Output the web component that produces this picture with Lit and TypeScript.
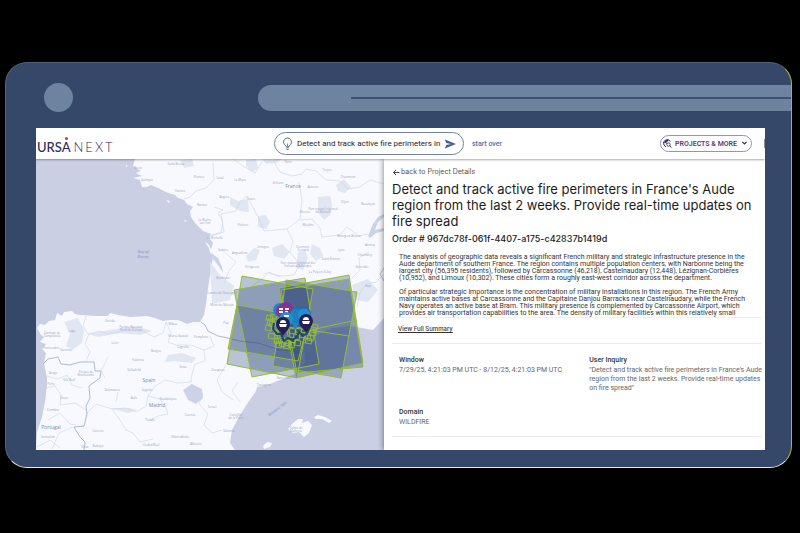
import { LitElement, html, svg, css } from "lit";
import { customElement } from "lit/decorators.js";

type Label = [number, number, string];

const TOWNS: Label[] = [
  [138, 169, "Brest"], [147, 181, "Quimper"], [176, 165, "Saint-Brieuc"], [199, 178, "Rennes"], [220, 179, "Laval"],
  [240, 181, "Le Mans"], [224, 198, "Angers"], [251, 200, "Tours"], [202, 206, "Nantes"], [180, 192, "Vannes"],
  [205, 221, "La Roche-"], [205, 224, "sur-Yon"], [215, 239, "La Rochelle"], [223, 251, "Saintes"], [243, 226, "Poitiers"],
  [263, 248, "Limoges"], [240, 254, "Angoulême"], [252, 268, "Périgueux"], [223, 279, "Bordeaux"], [278, 184, "Orléans"],
  [313, 188, "Auxerre"], [327, 171, "Troyes"], [348, 178, "Chaumont"], [345, 203, "Dijon"], [368, 205, "Besançon"],
  [305, 213, "Nevers"], [308, 226, "Moulins"], [323, 210, "Parc naturel régional"], [323, 213, "du Morvan"],
  [349, 237, "Bourg-en-Bresse"], [303, 248, "Clermont-"], [303, 251, "Ferrand"], [331, 260, "Saint-Étienne"], [341, 251, "Lyon"],
  [298, 264, "Parc naturel régional des"], [298, 267, "Volcans d'Auvergne"], [320, 273, "Le Puy-en-Velay"], [362, 268, "Grenoble"],
  [370, 246, "Annecy"], [365, 256, "Chambéry"], [368, 287, "Gap"], [222, 294, "Landes de Gascogne"],
  [288, 163, "Paris"], [52, 334, "Santiago de"], [52, 337, "Compostela"], [72, 332, "Lugo"], [110, 322, "Oviedo"],
  [131, 328, "Parque Nacional"], [131, 331, "Picos de Europa"], [173, 325, "Bilbao"], [178, 337, "Vitoria-Gasteiz"],
  [201, 338, "Pamplona"], [115, 344, "León"], [156, 352, "Burgos"], [138, 361, "Palencia"], [134, 371, "Valladolid"],
  [183, 348, "Logroño"], [183, 368, "Soria"], [218, 371, "Zaragoza"], [112, 391, "Salamanca"], [134, 399, "Ávila"],
  [147, 391, "Segovia"], [168, 400, "Guadalajara"], [150, 421, "Toledo"], [190, 416, "Cuenca"], [212, 408, "Teruel"],
  [98, 432, "Cáceres"], [98, 447, "Badajoz"], [151, 446, "Ciudad Real"], [180, 438, "Villarrobledo"], [196, 445, "Albacete"],
  [229, 432, "Valencia"], [236, 416, "Castellón"], [236, 419, "de la Plana"], [51, 349, "Pontevedra"], [66, 351, "Ourense"],
  [53, 374, "Braga"], [86, 373, "Parque de"], [86, 376, "Montesinho"], [51, 385, "Porto"], [69, 381, "Vila Real"],
  [64, 399, "Viseu"], [53, 411, "Coimbra"], [48, 438, "Santarém"], [85, 448, "Elvas"], [284, 379, "Barcelona"],
  [264, 386, "Tarragona"], [222, 306, "Mont-de-Marsan"], [226, 324, "Pau"], [296, 429, "Palma de"], [296, 432, "Mallorca"],
];

const BORDERS = [
  "M213 163 214 180 206 188 196 191 190 197 184 199",
  "M218 213 223 210 214 207M218 213 223 222 221 232 212 235",
  "M233 159 243 166 255 173 262 162M208 237 224 232 221 214 236 211 239 203 247 196",
  "M247 196 260 221 264 231 287 229 299 220 312 219 320 228 322 237 340 235 347 227 359 236 368 234",
  "M274 162 280 172 292 176 302 174 306 169 316 171 326 180 340 181 348 189 360 187 370 180 384 184",
  "M299 182 302 200 300 219M287 229 293 241 290 252 300 264 294 275 281 276 268 273 262 279 250 288",
  "M222 250 236 262 229 271 224 283M263 275 269 272 280 277M352 278 360 270 359 258 369 252",
  "M357 307 360 292 367 284 376 282 384 274",
  "M86 316 83 326 88 334 100 331 107 334 121 332 132 327 145 332 154 337 163 333 166 322",
  "M166 322 171 333 168 342 176 345 191 345 204 350 214 346 210 336",
  "M89 334 85 344 90 352 86 361M204 350 205 361 195 364 192 374 191 382",
  "M191 382 178 383 165 380 155 386 148 396 146 406 136 412 126 408 112 409 96 404 86 414",
  "M191 384 203 394 199 404 208 414 204 425 212 433 222 430",
  "M148 396 160 399 166 408 168 414 158 416 150 420M112 409 120 420 126 430 133 433 140 442 153 439",
  "M46 376 58 379 67 375 72 385 82 388M46 388 55 386 61 395 60 405 75 403 86 410M48 420 60 413 70 424 76 425",
  "M108 357 101 371 105 378M118 392 116 402M226 365 217 380 222 392 233 400M238 382 232 391 240 402",
  "M37 447 50 440 60 448M52 449 59 433 73 427",
];

const PARKS = [
  "M64 322 78 318 84 330 82 343 72 350 66 346 70 334Z",
  "M88 334 104 331 122 328 140 327 152 331 140 335 120 333 98 337Z",
  "M168 355 182 353 196 358 192 363 174 361 165 362Z",
  "M318 197 330 196 332 205 330 215 324 220 318 212Z",
  "M336 185 344 179 351 187 345 193 338 191Z",
  "M230 197 238 201 248 199 249 212 240 211 230 205Z",
  "M258 216 266 215 270 222 266 229 258 227Z",
  "M246 256 254 248 260 250 256 260 248 262Z",
  "M272 248 282 244 290 252 284 259 274 256Z",
  "M298 252 305 250 308 258 303 270 296 268Z",
  "M312 244 320 248 323 256 316 261 310 254Z",
  "M210 262 220 275 234 286 230 300 212 304Z",
  "M246 160 256 159 258 168 252 172 246 166Z",
  "M262 159 282 159 276 163 266 164Z",
  "M352 285 368 279 378 290 368 302 356 300Z",
  "M110 408 128 408 138 410 128 413Z",
  "M180 160 192 159 194 166 184 168Z",
];

const FOOTPRINTS = [
  "M234 290 305 278 319 364 252 377Z",
  "M242 276 313 289 297 378 227 364Z",
  "M237 305 309 318 298 361 228 349Z",
  "M286 280 357 292 341 378 273 366Z",
  "M279 288 349 275 363 363 296 378Z",
  "M281 290 349 279 363 367 297 373Z",
];

const CHIPS: [number, number][] = [
  [267, 315], [271, 314], [270, 321], [266, 325], [269, 333], [275, 330], [275, 338], [280, 341], [285, 340],
  [290, 337], [289, 342], [295, 340], [294, 334], [300, 332], [305, 333], [306, 338], [310, 330], [312, 324], [276, 342],
  [268, 319], [273, 318], [308, 335], [311, 327], [284, 343], [279, 337], [290, 328], [296, 327],
];

const pin = (x: number, y: number, color: string) => svg`
  <g transform="translate(${x} ${y})">
    <path d="M0 12C-2 8-7 5-7 0A7 7 0 0 1 7 0C7 5 2 8 0 12Z" fill=${color} />
    <path d="M-3 -1A3 3 0 0 1 3 -1ZM-4 0H4L3 3H-3Z" fill="#fff" />
  </g>`;

@customElement("ursa-map")
class UrsaMap extends LitElement {
  static styles = css`
    :host { display: block; position: relative; overflow: hidden; background: #cacfe4; }
    svg { position: absolute; inset: 0; width: 100%; height: 100%; display: block; }
    text { font-family: "Open Sans", "Noto Sans", sans-serif; text-anchor: middle; }
    .land { fill: #f7f9fe; }
    .park { fill: #e1e6f3; }
    .lake { fill: #ccd3e7; }
    .border { fill: none; stroke: #cdd3e3; stroke-width: 0.6; }
    .nation { fill: none; stroke: #b0b8d6; stroke-width: 1; }
    .town { font-size: 3px; fill: #98a3c2; }
    .country { font-size: 5px; fill: #7c8ab3; }
    .sea { font-size: 4px; font-style: italic; fill: #8093c6; }
    .area { fill: #2a4676; fill-opacity: 0.3; stroke: none; }
    .outline { fill: none; stroke: #93bd32; stroke-width: 1; }
  `;

  render() {
    return html`
      <svg viewBox="36 159 348 291" preserveAspectRatio="xMidYMid slice" role="img" aria-label="Map of France and Spain">
        <path class="land" d="M135 159 133 166 141 171 136 173 142 176 133 178 140 180 142 187 147 187 151 185 158 188 168 193 175 195 178 198 184 200 187 204 193 207 190 211 191 217 195 223 203 231 211 234 209 238 213 243 211 249 207 243 210 252 213 257 208 288 206 304 204 315 200 322 193 322 187 324 178 320 170 320 163 321 155 318 147 316 130 317 118 315 110 313 108 316 97 316 80 315 75 314 72 311 64 312 62 316 57 313 55 320 49 321 45 325 40 324 37 328 41 335 44 337 40 342 46 344 42 349 46 353 44 363 47 378 47 386 45 402 42 417 37 432 36 450H235L230 443 232 430 240 415 249 401 256 391 257 387 270 384 285 378 297 373 305 362 304 345 318 334 332 328 350 326 362 328 373 330 384 318V159Z" />
        <path class="land" d="M288 429 292 424 298 419 303 419 302 423 308 421 312 425 309 433 304 437 299 432 293 433ZM314 417 318 415 325 417 332 421 329 423 322 419 316 419ZM263 446 267 442 272 443 270 447 264 449ZM166 200 170 201 169 203ZM184 220 187 221 185 222ZM205 241 210 246 208 247ZM126 165 128 166 126 167Z" />
        <path class="lake" d="M211 253 218 258 222 267 223 273 218 265 212 258ZM368 236 373 224 378 217 384 214V217L378 222 375 230 384 228V231L376 233 370 238ZM183 390 192 384 202 389 203 398 196 404 188 400Z" />
        ${PARKS.map((d) => svg`<path class="park" d=${d} />`)}
        ${BORDERS.map((d) => svg`<path class="border" d=${d} />`)}
        <path class="nation" d="M43 364 48 359 58 357 61 364 70 365 80 362 94 362 95 371 101 371 100 378 89 386 90 398 86 406 87 414 84 426 74 427 80 437 85 442 84 450M201 322 205 325 208 331 218 336 228 338 239 341 258 343 280 350 303 353M384 268 380 274 384 281" />
        ${TOWNS.map(([x, y, t]) => svg`<text class="town" x=${x} y=${y}>${t}</text>`)}
        <text class="country" x="293" y="188">France</text>
        <text class="country" x="149" y="382">Spain</text>
        <text class="country" x="157" y="407">Madrid</text>
        <text class="country" x="51" y="429">Portugal</text>
        <text class="sea" x="143" y="253">Bay of</text>
        <text class="sea" x="143" y="258">Biscay</text>
        <text class="sea" transform="translate(278 410) rotate(-37)">Balearic Sea</text>
        ${FOOTPRINTS.map((d) => svg`<path class="area" d=${d} />`)}
        ${FOOTPRINTS.map((d) => svg`<path class="outline" d=${d} />`)}
        <path class="outline" d="M281 326 349 336M315 329 357 320" />
        ${CHIPS.map(([x, y]) => svg`<rect x=${x} y=${y} width="6" height="5" transform="rotate(10 ${x} ${y})" class="outline" />`)}
        <path d="M274 323 273 329 277 334 281 334 284 341 288 338 292 340 297 337 299 332 303 336 307 333 310 327" fill="none" stroke="#1f4a63" stroke-width="2" />
        <circle cx="280" cy="310" r="7" fill="#1e86c5" />
        <circle cx="286" cy="309" r="7" fill="#84338f" />
        <circle cx="283" cy="311" r="7" fill="#84338f" />
        <path d="M279 309H283M285 309H289M279 312H283M285 312H288" stroke="#fff" stroke-width="2" />
        <circle cx="304" cy="314" r="7" fill="#84338f" />
        <path d="M295 330 290 318H302Z" fill="#1e86c5" />
        <circle cx="297" cy="315" r="7" fill="#1e86c5" stroke="#1673b2" />
        <circle cx="301" cy="315" r="7" fill="#1e86c5" stroke="#1673b2" />
        <circle cx="304" cy="315" r="7" fill="#2190cf" stroke="#1673b2" />
        <circle cx="286" cy="319" r="7" fill="#2190cf" />
        <path d="M284 316H289" stroke="#fff" stroke-width="2" />
        ${pin(283, 324, "#251f56")}
        ${pin(306, 321, "#251f56")}
      </svg>
    `;
  }
}

@customElement("app-root")
class AppRoot extends LitElement {
  static styles = css`
    :host {
      display: flex;
      box-sizing: border-box;
      min-height: 100vh;
      padding: 62px 8px 65px 5px;
      background: #000;
      font-family: Inter, "Liberation Sans", sans-serif;
      color: #222;
    }
    * { box-sizing: border-box; }
    button { font: inherit; background: none; border: 0; padding: 0; cursor: pointer; }
    .frame {
      flex: 1;
      display: flex;
      flex-direction: column;
      min-width: 0;
      background: #354869;
      border: 1px solid #52617d;
      border-right-color: #a9b83a;
      border-bottom-color: #e9ecc8;
      border-radius: 22px;
      overflow: hidden;
    }
    .chrome { display: flex; align-items: center; height: 65px; padding: 4px 0 0 38px; }
    .dot { width: 29px; height: 29px; border-radius: 50%; background: #6e839f; margin-right: 185px; }
    .bar {
      flex: 1;
      display: flex;
      align-items: center;
      height: 26px;
      padding-left: 93px;
      margin-right: -1px;
      border-radius: 13px 0 0 13px;
      background: #6e839f;
    }
    .groove { flex: 1; height: 2px; background: #3d5175; }
    .screen {
      flex: 1;
      display: flex;
      flex-direction: column;
      margin: 0 26px 17px 30px;
      background: #fff;
      overflow: hidden;
    }
    .top {
      position: relative;
      z-index: 1;
      display: flex;
      align-items: center;
      height: 31px;
      background: #fff;
      box-shadow: 0 1px 2px #0005;
    }
    .logo {
      flex: 0 0 238px;
      display: flex;
      align-items: center;
      gap: 3px;
      padding-top: 6px;
      font: 500 13px/16px Lato, sans-serif;
      color: #2c2b5c;
    }
    .ursa { position: relative; padding-left: 1px; }
    .ursa::after {
      content: "";
      position: absolute;
      top: -2px;
      right: 3px;
      width: 3px;
      height: 3px;
      border-radius: 50%;
      background: #e0303c;
    }
    .next { font-weight: 300; letter-spacing: 2px; }
    .search {
      flex: 0 1 190px;
      display: flex;
      align-items: center;
      gap: 4px;
      height: 23px;
      padding: 0 7px;
      border: 1px solid #7383a6;
      border-radius: 12px;
    }
    .search input {
      flex: 1;
      min-width: 0;
      border: 0;
      padding: 0;
      outline: 0;
      background: none;
      font: 400 8px/12px Roboto, sans-serif;
      color: #1b1b1b;
    }
    .send { display: flex; }
    .over { margin-left: 8px; font: 500 7px/12px Roboto, sans-serif; color: #52709f; }
    .projects {
      display: flex;
      align-items: center;
      gap: 3px;
      height: 17px;
      margin: 0 12px 0 auto;
      padding: 0 2px;
      border: 1px solid #9a92b4;
      border-radius: 9px;
      font: 600 7px/12px Roboto, sans-serif;
      color: #564078;
    }
    .edge { width: 1px; height: 9px; background: #8c9197; }
    .body { flex: 1; display: grid; grid-template-columns: 348fr 381fr; }
    .panel {
      position: relative;
      padding: 7px 3px 13px 8px;
      background: #fff;
      box-shadow: -1px 0 5px #0006;
    }
    .back {
      display: flex;
      align-items: center;
      gap: 1px;
      font-size: 7px;
      line-height: 12px;
      color: #555;
      text-decoration: none;
    }
    h1 { margin: 3px 0 0; font-weight: 400; font-size: 13px; line-height: 16px; color: #1c1c1c; }
    h2 { margin: 4px 0 0; font-weight: 500; font-size: 9px; line-height: 12px; color: #222; }
    .summary {
      margin: 9px 0 0;
      padding-left: 7px;
      font: 400 7px/7px Roboto, sans-serif;
      color: #333;
      border-bottom: 1px solid #f0f0f0;
    }
    .summary p { margin: 0; white-space: nowrap; }
    .summary p + p { margin-top: 7px; }
    .full { display: block; margin: 5px 0 0 6px; font: 500 6px/12px Inter, sans-serif; color: #333; text-decoration: underline; }
    .facts {
      display: grid;
      grid-template-columns: 1fr 1fr;
      column-gap: 18px;
      row-gap: 13px;
      margin: 8px 0 0;
      padding: 10px 0 9px 7px;
      border: solid #ececec;
      border-width: 1px 0;
      font: 400 7px/9px Roboto, sans-serif;
      color: #666;
    }
    dt { font-weight: 500; line-height: 12px; color: #333; }
    dd { margin: 0; white-space: nowrap; }
  `;

  render() {
    return html`
      <div class="frame">
        <div class="chrome">
          <div class="dot"></div>
          <div class="bar"><div class="groove"></div></div>
        </div>
        <div class="screen">
          <header class="top">
            <div class="logo"><span class="ursa">URSA</span><span class="next">NEXT</span></div>
            <form class="search" @submit=${(e: Event) => e.preventDefault()}>
              <svg width="11" height="14" viewBox="0 0 11 14" fill="none" stroke="#566a94">
                <path d="M3.5 8.5A4 4 0 1 1 7.500 8.500L6.500 10H4.500Z" />
                <path d="M4 11H7M4.500 12.500H6.500M5.500 9.500V6.500" stroke-width="0.8" />
              </svg>
              <input aria-label="Inquiry" value="Detect and track active fire perimeters in" />
              <button class="send" aria-label="Send">
                <svg width="11" height="10" viewBox="0 0 11 10"><path d="M0 0.500 11 5 0 9.500 1 6 6 5 1 4Z" fill="#4a6390" /></svg>
              </button>
            </form>
            <button class="over">start over</button>
            <button class="projects">
              <svg width="9" height="9" viewBox="0 0 9 9" fill="none" stroke="#3d2c63">
                <path d="M1 6A3.500 3.500 0 0 1 7.500 2.500M1 6 3 8M1.500 3 4 4.500" />
                <path d="M1 3.500 3 1 6 1 4 3 2 4Z" fill="#3d2c63" stroke="none" />
                <circle cx="5.500" cy="5.500" r="1.700" stroke-width="0.900" />
                <path d="M6.800 6.800 8.500 8.500" />
              </svg>
              <span>PROJECTS &amp; MORE</span>
              <svg width="9" height="5" viewBox="0 0 9 5"><path d="M2.500 1 4.500 3 6.500 1" fill="none" stroke="#3d2c63" stroke-width="1.200" /></svg>
            </button>
            <div class="edge"></div>
          </header>
          <main class="body">
            <ursa-map></ursa-map>
            <section class="panel">
              <a class="back" href="#">
                <svg width="8" height="7" viewBox="0 0 8 7" fill="none" stroke="#444"><path d="M7.500 3.500H1.500M4 1 1.500 3.500 4 6" /></svg>back to Project Details
              </a>
              <h1>Detect and track active fire perimeters in France's Aude region from the last 2 weeks. Provide real-time updates on fire spread</h1>
              <h2>Order # 967dc78f-061f-4407-a175-c42837b1419d</h2>
              <div class="summary">
                <p>The analysis of geographic data reveals a significant French military and strategic infrastructure presence in the<br />
                  Aude department of southern France. The region contains multiple population centers, with Narbonne being the<br />
                  largest city (56,395 residents), followed by Carcassonne (46,218), Castelnaudary (12,448), Lézignan-Corbières<br />
                  (10,952), and Limoux (10,302). These cities form a roughly east-west corridor across the department.</p>
                <p>Of particular strategic importance is the concentration of military installations in this region. The French Army<br />
                  maintains active bases at Carcassonne and the Capitaine Danjou Barracks near Castelnaudary, while the French<br />
                  Navy operates an active base at Bram. This military presence is complemented by Carcassonne Airport, which<br />
                  provides air transportation capabilities to the area. The density of military facilities within this relatively small</p>
              </div>
              <button class="full">View Full Summary</button>
              <dl class="facts">
                <div><dt>Window</dt><dd>7/29/25, 4:21:03 PM UTC - 8/12/25, 4:21:03 PM UTC</dd></div>
                <div><dt>User Inquiry</dt><dd>"Detect and track active fire perimeters in France's Aude<br />region from the last 2 weeks. Provide real-time updates<br />on fire spread"</dd></div>
                <div><dt>Domain</dt><dd>WILDFIRE</dd></div>
              </dl>
            </section>
          </main>
        </div>
      </div>
    `;
  }
}
